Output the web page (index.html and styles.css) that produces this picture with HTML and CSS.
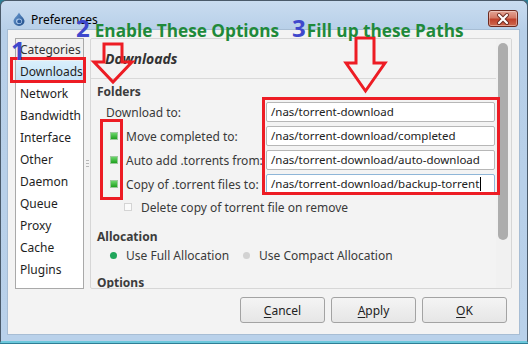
FILE: index.html
```html
<!DOCTYPE html>
<html>
<head>
<meta charset="utf-8">
<link rel="stylesheet" href="styles.css">
</head>
<body>
<div class="window">
  <div class="titlebar">
    <svg class="app-icon" width="12" height="14" viewBox="0 0 12 14">
      <defs>
        <linearGradient id="drop" x1="0" y1="0" x2="1" y2="1">
          <stop offset="0" stop-color="#6e9fd6"/>
          <stop offset="1" stop-color="#1d4a86"/>
        </linearGradient>
      </defs>
      <path d="M6 0.5 C5 3 0.5 6.5 0.5 9 A5.5 5 0 0 0 11.5 9 C11.5 6.5 7 3 6 0.5Z" fill="url(#drop)"/>
      <ellipse cx="6" cy="9.2" rx="3" ry="2.8" fill="#a9c7ea"/>
      <ellipse cx="6.3" cy="9.4" rx="2" ry="1.9" fill="#2e5e9e"/>
    </svg>
    <span class="title">Preferences</span>
    <div class="close">
      <svg width="28" height="14" viewBox="0 0 28 14">
        <path d="M10 3 L18 11 M18 3 L10 11" stroke="#6b2a20" stroke-width="4" stroke-linecap="round"/>
        <path d="M10 3 L18 11 M18 3 L10 11" stroke="#ffffff" stroke-width="2.2" stroke-linecap="round"/>
      </svg>
    </div>
  </div>
  <div class="client">
    <div class="main">
      <div class="catlist">
        <div class="cat-head">Categories</div>
        <div class="cat sel">Downloads</div>
        <div class="cat">Network</div>
        <div class="cat">Bandwidth</div>
        <div class="cat">Interface</div>
        <div class="cat">Other</div>
        <div class="cat">Daemon</div>
        <div class="cat">Queue</div>
        <div class="cat">Proxy</div>
        <div class="cat">Cache</div>
        <div class="cat">Plugins</div>
      </div>
      <div class="splitter"><span></span><span></span><span></span></div>
      <div class="panel">
        <div class="pcontent">
          <div class="phead">Downloads</div>
          <div class="stitle first">Folders</div>
          <div class="fgrid">
            <div class="flabel">Download to:</div>
            <div class="finput">/nas/torrent-download</div>
            <div class="flabel chk"><span class="cb on"></span>Move completed to:</div>
            <div class="finput">/nas/torrent-download/completed</div>
            <div class="flabel chk"><span class="cb on"></span>Auto add .torrents from:</div>
            <div class="finput">/nas/torrent-download/auto-download</div>
            <div class="flabel chk"><span class="cb on"></span>Copy of .torrent files to:</div>
            <div class="finput focus">/nas/torrent-download/backup-torrent<span class="caret"></span></div>
          </div>
          <div class="delrow"><span class="cb"></span>Delete copy of torrent file on remove</div>
          <div class="stitle alloc">Allocation</div>
          <div class="radios">
            <span class="rd on"></span><span class="rtext">Use Full Allocation</span>
            <span class="rd"></span><span class="rtext">Use Compact Allocation</span>
          </div>
          <div class="stitle opts">Options</div>
        </div>
        <div class="scrollbar"><div class="thumb"></div></div>
      </div>
    </div>
    <div class="buttons">
      <div class="btn"><u>C</u>ancel</div>
      <div class="btn"><u>A</u>pply</div>
      <div class="btn"><u>O</u>K</div>
    </div>
  </div>

  <svg class="arrows" width="528" height="344" viewBox="0 0 528 344">
    <polygon points="104,44 122,44 122,62 132,62 113,82 94,62 104,62" fill="none" stroke="#ed1c24" stroke-width="3"/>
    <polygon points="356,38 374,38 374,63 385,63 365.5,91 346,63 356,63" fill="none" stroke="#ed1c24" stroke-width="3"/>
  </svg>
  <div class="rbox b1"></div>
  <div class="rbox b2"></div>
  <div class="rbox b3"></div>
  <span class="num n1">1</span>
  <div class="note n2"><span class="num">2</span><span class="gtext">Enable These Options</span></div>
  <div class="note n3"><span class="num">3</span><span class="gtext">Fill up these Paths</span></div>
</div>
</body>
</html>
```
FILE: styles.css
```css
* { box-sizing: border-box; }
html, body { margin: 0; padding: 0; }
body {
  width: 528px;
  height: 344px;
  overflow: hidden;
  font-family: "Noto Sans", "Open Sans", sans-serif;
  font-size: 12px;
  background: #2e7f96;
}
.window {
  position: relative;
  width: 528px;
  height: 343px;
  background: linear-gradient(180deg, #c9dcf0 0px, #b7cfe8 30px, #b9d1ea 100%);
  border: 1px solid #4a5a6a;
  border-bottom: 2px solid #6cc8dc;
  border-radius: 6px 6px 0 0;
  display: flex;
  flex-direction: column;
}
.titlebar {
  height: 28px;
  display: flex;
  align-items: center;
  padding-left: 12px;
  padding-top: 8px;
  position: relative;
}
.app-icon { flex: none; }
.title {
  margin-left: 6px;
  color: #000;
  font-size: 12px;
  font-family: "Noto Sans", sans-serif;
}
.close {
  position: absolute;
  right: 9px;
  top: 9px;
  width: 30px;
  height: 17px;
  border: 1px solid #6d2a1f;
  border-radius: 3px;
  background: linear-gradient(180deg, #e3a596 0%, #d47a66 45%, #c0412b 55%, #cf6a4f 100%);
  display: flex;
  align-items: center;
  justify-content: center;
  box-shadow: inset 0 0 0 1px rgba(255,255,255,0.35);
}
.close svg { display: block; }
.client {
  flex: 1;
  margin: 0 7px 6px 6px;
  background: #f3f3f3;
  border: 1px solid #a7bdd4;
  padding: 8px 7px 0 7px;
  display: flex;
  flex-direction: column;
}
.main {
  display: flex;
  height: 251px;
}
.catlist {
  width: 69px;
  height: 251px;
  border: 1px solid #a9a9a9;
  background: #fff;
  color: #1e1e1e;
}
.cat-head {
  height: 22px;
  line-height: 22px;
  padding-left: 4px;
  background: #f0f0f0;
  color: #333;
}
.cat {
  height: 22px;
  line-height: 22px;
  padding-left: 4px;
}
.cat.sel {
  background: linear-gradient(180deg, #d9effc, #c1e1f6);
}
.splitter {
  width: 6px;
  display: flex;
  flex-direction: column;
  align-items: center;
  justify-content: center;
  gap: 2px;
}
.splitter span {
  display: block;
  width: 3px;
  height: 1px;
  background: #b8b8b8;
}
.panel {
  width: 422px;
  height: 251px;
  border: 1px solid #d6d6d6;
  border-radius: 2px;
  background: #f3f3f3;
  display: flex;
  overflow: hidden;
}
.pcontent {
  flex: 1;
  overflow: hidden;
  color: #3a3a3a;
}
.phead {
  height: 40px;
  border-bottom: 1px solid #d9d9d9;
  padding-left: 14px;
  display: flex;
  align-items: center;
  font-weight: bold;
  font-style: italic;
  font-size: 14px;
  color: #333;
}
.stitle {
  height: 20px;
  line-height: 20px;
  padding-left: 6px;
  font-weight: bold;
  color: #3c3c3c;
}
.stitle.first { margin-top: 3px; }
.fgrid {
  display: grid;
  grid-template-columns: 175px 229px;
  grid-auto-rows: 20px;
  row-gap: 4px;
}
.flabel {
  display: flex;
  align-items: center;
  padding-left: 15px;
  white-space: nowrap;
}
.flabel.chk { padding-left: 19px; }
.cb {
  display: inline-block;
  width: 8px;
  height: 8px;
  margin-right: 8px;
  border: 1px solid #d4d4d4;
  background: #fbfbfb;
  flex: none;
}
.cb.on {
  border-color: #9cc99c;
  background: linear-gradient(180deg, #6bd66b, #1fa01f);
}
.finput {
  border: 1px solid #b7b7b7;
  border-radius: 2px;
  background: #fff;
  padding-left: 4px;
  line-height: 18px;
  font-size: 11.5px;
  color: #222;
  white-space: nowrap;
  overflow: hidden;
}
.finput.focus { border-color: #8fb6d8; }
.caret {
  display: inline-block;
  width: 1px;
  height: 14px;
  background: #000;
  vertical-align: -3px;
  margin-left: 1px;
}
.delrow {
  margin-top: 4px;
  height: 18px;
  display: flex;
  align-items: center;
  padding-left: 33px;
}
.delrow .cb { margin-right: 9px; }
.stitle.alloc { margin-top: 11px; }
.radios {
  height: 18px;
  margin-top: -1px;
  display: flex;
  align-items: center;
  padding-left: 19px;
}
.rd {
  width: 7px;
  height: 7px;
  border-radius: 50%;
  background: #d2d2d2;
  margin-right: 9px;
  flex: none;
}
.rd.on { background: #1fa55a; }
.rtext { margin-right: 14px; }
.stitle.opts { margin-top: 9px; }
.scrollbar {
  width: 15px;
  flex: none;
  padding: 4px 3px 0 2px;
  background: #f1f1f1;
}
.thumb {
  width: 10px;
  height: 197px;
  border-radius: 5px;
  background: #adadad;
}
.buttons {
  display: flex;
  justify-content: flex-end;
  gap: 6px;
  margin-top: 8px;
  padding-right: 5px;
}
.btn {
  width: 85px;
  height: 26px;
  border: 1px solid #a3a3a3;
  border-radius: 3px;
  background: linear-gradient(180deg, #f4f4f4, #e6e6e6);
  display: flex;
  align-items: center;
  justify-content: center;
  color: #222;
}
.btn u { text-decoration: underline; text-underline-offset: 2px; }

/* annotations */
.arrows {
  position: absolute;
  left: -1px;
  top: -1px;
  pointer-events: none;
}
.rbox {
  position: absolute;
  border: 3px solid #ed1c24;
}
.b1 { left: 9px; top: 56px; width: 76px; height: 26px; }
.b2 { left: 99px; top: 118px; width: 23px; height: 81px; }
.b3 { left: 261px; top: 96px; width: 238px; height: 98px; }
.num {
  font-family: "Open Sans", sans-serif;
  font-weight: bold;
  font-size: 24px;
  color: #3f48cc;
  line-height: 1;
}
.n1 { position: absolute; left: 10px; top: 37px; font-size: 25px; }
.note {
  position: absolute;
  top: 15px;
  display: flex;
  align-items: baseline;
  white-space: nowrap;
}
.n2 { left: 75px; }
.n3 { left: 291px; }
.gtext {
  font-family: "Open Sans", sans-serif;
  font-weight: bold;
  font-size: 17.2px;
  color: #1f8a3a;
  margin-left: 5px;
}
.n3 .gtext { margin-left: 1px; }
```
